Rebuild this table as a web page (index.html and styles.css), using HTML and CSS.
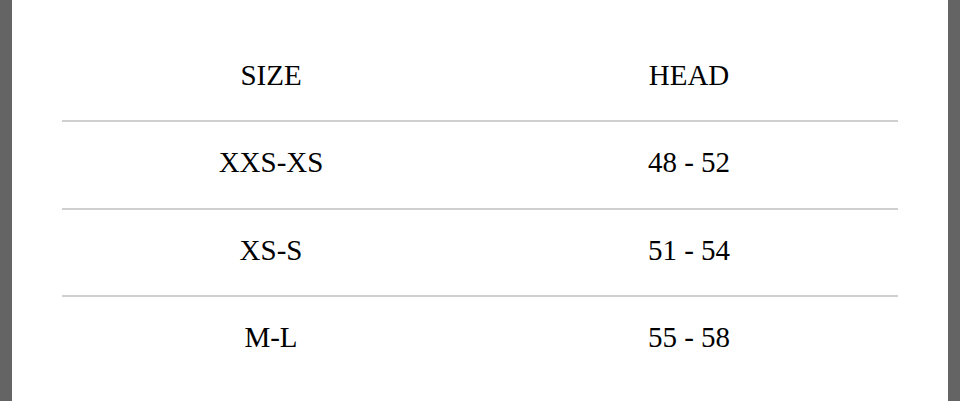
FILE: index.html
```html
<!DOCTYPE html>
<html>
<head>
<meta charset="utf-8">
<link rel="stylesheet" href="styles.css">
</head>
<body>
<div class="frame">
  <div class="edge"></div>
  <main class="sheet">
    <div class="chart">
      <div class="row">
        <div class="cell">SIZE</div>
        <div class="cell">HEAD</div>
      </div>
      <div class="row">
        <div class="cell">XXS-XS</div>
        <div class="cell">48 - 52</div>
      </div>
      <div class="row">
        <div class="cell">XS-S</div>
        <div class="cell">51 - 54</div>
      </div>
      <div class="row last">
        <div class="cell">M-L</div>
        <div class="cell">55 - 58</div>
      </div>
    </div>
  </main>
  <div class="edge"></div>
</div>
</body>
</html>
```
FILE: styles.css
```css
html, body {
  margin: 0;
  padding: 0;
  background: #ffffff;
}
.frame {
  display: flex;
  width: 960px;
  height: 401px;
  overflow: hidden;
}
.edge {
  width: 12px;
  flex: 0 0 12px;
  background: #646464;
}
.sheet {
  flex: 1;
  background: #ffffff;
  padding: 34.5px 50px 0 50px;
}
.chart {
  display: flex;
  flex-direction: column;
}
.row {
  display: grid;
  grid-template-columns: 1fr 1fr;
  height: 85.5px;
  border-bottom: 2px solid #d0d0d0;
}
.row.last {
  border-bottom: none;
}
.cell {
  font-family: "Liberation Serif", "Times New Roman", serif;
  font-size: 29px;
  line-height: 33px;
  color: #000000;
  text-align: center;
  padding-top: 24px;
}
```
